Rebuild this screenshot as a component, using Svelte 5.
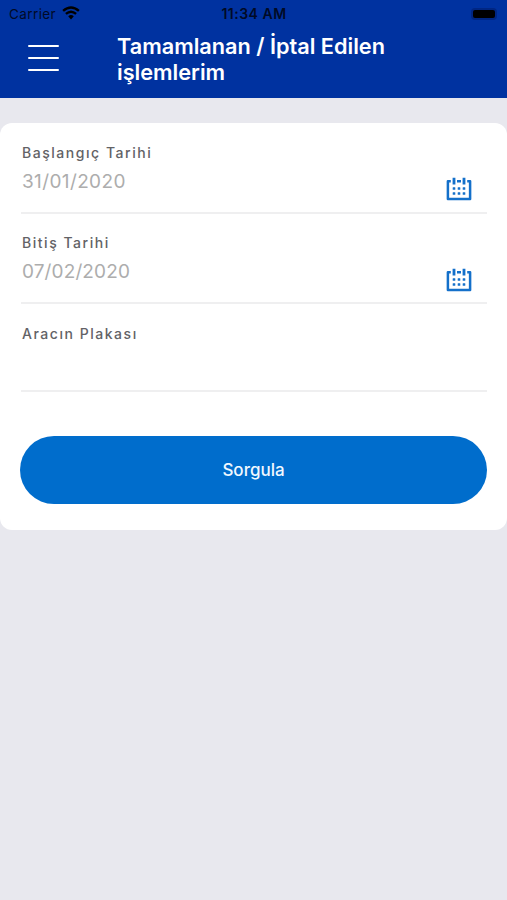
<script>
    let fields = [
        { id: "start", label: "Başlangıç Tarihi", value: "31/01/2020", date: true },
        { id: "end", label: "Bitiş Tarihi", value: "07/02/2020", date: true },
        { id: "plate", label: "Aracın Plakası", value: "", date: false },
    ];

    const dots = [11.5, 16.5].flatMap((y) => [8, 13, 18].map((x) => ({ x, y })));
</script>

<div class="screen">
    <header>
        <div class="status">
            <div class="carrier">
                <span>Carrier</span>
                <svg width="18" height="14" viewBox="0 0 18 14">
                    <path d="M9 13.4 6.2 10.3Q9 7.9 11.8 10.3Z" fill="#000" />
                    <path d="M3.9 7.9Q9 3.5 14.1 7.9M1.1 4.9Q9 -1.9 16.9 4.9" fill="none" stroke="#000" stroke-width="2.4" />
                </svg>
            </div>
            <span class="time">11:34 AM</span>
            <div class="battery"><i></i></div>
        </div>
        <div class="bar">
            <button class="menu" aria-label="Menü">
                <i></i>
                <i></i>
                <i></i>
            </button>
            <h1>Tamamlanan / İptal Edilen<br />işlemlerim</h1>
        </div>
    </header>

    <main>
        {#each fields as field}
            <div class="field {field.id}">
                <div class="text">
                    <span class="label">{field.label}</span>
                    <span class="value">{field.value}</span>
                </div>
                {#if field.date}
                    <svg width="26" height="24" viewBox="0 0 26 24">
                        <path d="M4.8 4.3H1.9V22H24.1V4.3H21.2M11 4.3H15" fill="none" stroke="#1470ca" stroke-width="2.5" stroke-linejoin="round" />
                        <path d="M8 .8V7.4M18 .8V7.4" stroke="#1470ca" stroke-width="2.8" />
                        {#each dots as dot}
                            <rect x={dot.x - 1.3} y={dot.y - 1.2} width="2.6" height="2.4" rx="0.5" fill="#1470ca" />
                        {/each}
                    </svg>
                {/if}
            </div>
        {/each}
        <button class="submit">Sorgula</button>
    </main>
</div>

<style>
    :global(body) {
        margin: 0;
        background: #e8e8ee;
    }

    .screen {
        min-height: 900px;
        background: #e8e8ee;
        font-family: Inter, "Liberation Sans", sans-serif;
    }

    button {
        border: 0;
        padding: 0;
        font-family: inherit;
    }

    header {
        height: 98px;
        background: #0032a0;
    }

    .status {
        display: grid;
        grid-template-columns: 1fr auto 1fr;
        align-items: center;
        height: 27px;
        padding: 0 9px;
        color: #000a26;
        font-size: 13.5px;
    }

    .carrier {
        display: flex;
        align-items: center;
        gap: 6px;
        letter-spacing: 0.4px;
    }

    .carrier svg {
        margin-top: -2px;
    }

    .time {
        padding-left: 1px;
        font-size: 14px;
        font-weight: 600;
        letter-spacing: 0.5px;
    }

    .battery {
        justify-self: end;
        padding: 2px;
        margin-right: 1px;
        border-radius: 4px;
        background: #002683;
    }

    .battery i {
        display: block;
        width: 22px;
        height: 8px;
        border-radius: 2px;
        background: #000;
    }

    .bar {
        display: flex;
        padding: 6px 0 0 28px;
    }

    .menu {
        display: flex;
        flex-direction: column;
        gap: 9.5px;
        width: 31px;
        margin: 12px 58px 0 0;
        background: none;
    }

    .menu i {
        width: 31px;
        height: 2.4px;
        border-radius: 2px;
        background: #fff;
    }

    h1 {
        margin: 0;
        color: #fff;
        font-size: 21.7px;
        font-weight: 600;
        line-height: 26px;
    }

    main {
        box-sizing: border-box;
        height: 407px;
        margin-top: 25px;
        padding: 0 20px 0 21px;
        border-radius: 12px;
        background: #fff;
    }

    .field {
        box-sizing: border-box;
        display: flex;
        justify-content: space-between;
        align-items: flex-start;
        height: 91px;
        padding: 20px 15px 0 1px;
        border-bottom: 2px solid #efeff0;
    }

    .field.end {
        height: 90px;
        padding-top: 19px;
    }

    .field.plate {
        height: 88px;
    }

    .field svg {
        margin-top: 34px;
    }

    .field.end svg {
        margin-top: 35px;
    }

    .text {
        display: flex;
        flex-direction: column;
    }

    .label {
        color: #626266;
        font-size: 14px;
        font-weight: 500;
        line-height: 20px;
        letter-spacing: 1.53px;
    }

    .value {
        margin-top: 7px;
        color: #adadad;
        font-size: 19px;
        line-height: 24px;
        letter-spacing: 0.12px;
    }

    .start .value {
        letter-spacing: 0.38px;
    }

    .submit {
        display: block;
        width: 467px;
        height: 68px;
        margin: 44px 0 0 -1px;
        border-radius: 34px;
        background: #006dcc;
        color: #f0f8ff;
        font-size: 17px;
        font-weight: 500;
    }
</style>
